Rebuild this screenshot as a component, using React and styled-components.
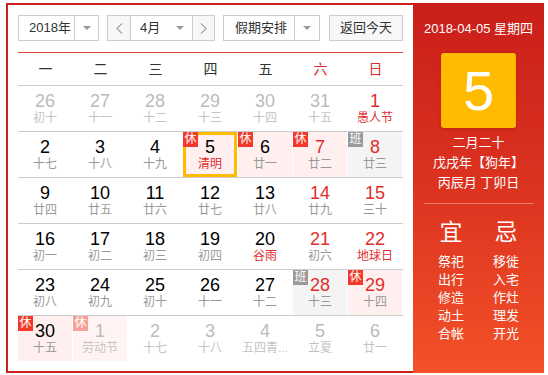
import React from 'react'
import styled, { createGlobalStyle, css } from 'styled-components'

const GlobalStyle = createGlobalStyle`
  body{
    margin:0;
    background:#fff;
    font-family:"Liberation Sans","Noto Sans CJK SC",sans-serif;
  }
`

const weekdays = ['一','二','三','四','五','六','日']

// n: day, l: lunar text, o: other month, f: festival (red lunar), b: badge (rest/work), t: today
const weeks = [
  [{n:26,l:'初十',o:1},{n:27,l:'十一',o:1},{n:28,l:'十二',o:1},{n:29,l:'十三',o:1},{n:30,l:'十四',o:1},{n:31,l:'十五',o:1},{n:1,l:'愚人节',f:1}],
  [{n:2,l:'十七'},{n:3,l:'十八'},{n:4,l:'十九'},{n:5,l:'清明',f:1,b:'rest',t:1},{n:6,l:'廿一',b:'rest'},{n:7,l:'廿二',b:'rest'},{n:8,l:'廿三',b:'work'}],
  [{n:9,l:'廿四'},{n:10,l:'廿五'},{n:11,l:'廿六'},{n:12,l:'廿七'},{n:13,l:'廿八'},{n:14,l:'廿九'},{n:15,l:'三十'}],
  [{n:16,l:'初一'},{n:17,l:'初二'},{n:18,l:'初三'},{n:19,l:'初四'},{n:20,l:'谷雨',f:1},{n:21,l:'初六'},{n:22,l:'地球日',f:1}],
  [{n:23,l:'初八'},{n:24,l:'初九'},{n:25,l:'初十'},{n:26,l:'十一'},{n:27,l:'十二'},{n:28,l:'十三',b:'work'},{n:29,l:'十四',b:'rest'}],
  [{n:30,l:'十五',b:'rest'},{n:1,l:'劳动节',o:1,b:'rest'},{n:2,l:'十七',o:1},{n:3,l:'十八',o:1},{n:4,l:'五四青...',o:1},{n:5,l:'立夏',o:1},{n:6,l:'廿一',o:1}],
]

const yi = ['祭祀','出行','修造','动土','合帐']
const ji = ['移徙','入宅','作灶','理发','开光']

const Frame = styled.div`
  margin:3px 0 0 6px;
  width:538px;
  height:370px;
  box-sizing:border-box;
  border:2px solid #cb1f1b;
  border-right:none;
  display:flex;
`

const Main = styled.div`
  width:405px;
  box-sizing:border-box;
  padding:10px 10px 0 10px;
`

const Toolbar = styled.div`
  display:flex;
  height:26px;
`

const Box = styled.div`
  display:flex;
  height:26px;
  box-sizing:border-box;
  border:1px solid #ccc;
  margin-right:${p=>p.$gap||8}px;
  font-size:13px;
  color:#333;
  background:#fff;
`

const Field = styled.div`
  width:${p=>p.$w}px;
  box-sizing:border-box;
  padding-left:${p=>p.$pad||10}px;
  line-height:24px;
  white-space:nowrap;
`

const Caret = styled.div`
  width:${p=>p.$w||24}px;
  display:flex;
  align-items:center;
  justify-content:center;
  border-left:${p=>p.$line?'1px solid #ccc':'none'};
  &::after{
    content:'';
    border-left:4px solid transparent;
    border-right:4px solid transparent;
    border-top:4px solid #999;
  }
`

const NavBtn = styled.div`
  width:${p=>p.$w}px;
  display:flex;
  align-items:center;
  justify-content:center;
  background:#f7f7f7;
  ${p=>p.$side==='left'?css`border-right:1px solid #ccc;`:css`border-left:1px solid #ccc;`}
`

const TodayBtn = styled.div`
  width:82px;
  height:26px;
  box-sizing:border-box;
  border:1px solid #ccc;
  background:#f7f7f7;
  font-size:13px;
  color:#333;
  line-height:24px;
  text-align:center;
`

const HeadRule = styled.div`
  margin-top:11px;
  border-top:1px solid #e4463b;
`

const WeekHead = styled.div`
  display:grid;
  grid-template-columns:repeat(7,55px);
  height:32px;
  border-bottom:1px solid #ccc;
`

const WeekName = styled.div`
  text-align:center;
  line-height:32px;
  font-size:14px;
  color:${p=>p.$red?'#e02e2e':'#333'};
`

const Row = styled.div`
  display:grid;
  grid-template-columns:repeat(7,54px);
  column-gap:1px;
  height:45px;
  border-bottom:${p=>p.$last?'none':'1px solid #ccc'};
`

const Cell = styled.div`
  position:relative;
  text-align:center;
  box-sizing:border-box;
  padding-top:5px;
  background:${p=>p.$b==='rest'?(p.$o?'#fff4f3':'#fff0ef'):p.$b==='work'?'#f4f4f4':'transparent'};
  ${p=>p.$t&&css`box-shadow:inset 0 0 0 3px #ffbb00;`}
`

const Badge = styled.div`
  position:absolute;
  top:0;
  left:0;
  width:15px;
  height:15px;
  line-height:15px;
  font-size:12px;
  color:#fff;
  text-align:center;
  background:${p=>p.$b==='work'?'#9a9a9a':p.$o?'#f6a197':'#f2392b'};
`

const Num = styled.div`
  font-size:18px;
  line-height:20px;
  color:${p=>p.$o?'#bbb':p.$red?'#e02e2e':'#000'};
`

const Lunar = styled.div`
  font-size:12px;
  line-height:14px;
  white-space:nowrap;
  color:${p=>p.$o?'#c4c4c4':p.$f?'#e02e2e':'#999'};
`

const Panel = styled.div`
  flex:1;
  margin:-2px 0;
  background:linear-gradient(180deg,#ca1e1a 0%,#dc3320 50%,#f35128 100%);
  color:#fff;
  display:flex;
  flex-direction:column;
  align-items:center;
  padding-top:16px;
`

const DateLine = styled.div`
  font-size:13px;
  line-height:20px;
`

const BigDay = styled.div`
  margin-top:14px;
  width:75px;
  height:75px;
  border-radius:3px;
  background:#ffbb00;
  box-shadow:0 1px 3px rgba(120,20,0,.35);
  font-size:56px;
  line-height:75px;
  text-align:center;
  font-family:"Liberation Sans",sans-serif;
`

const LunarInfo = styled.div`
  margin-top:5px;
  font-size:13px;
  line-height:20px;
  text-align:center;
`

const PanelRule = styled.div`
  margin-top:10px;
  width:110px;
  border-top:1px solid rgba(255,255,255,.35);
`

const Advice = styled.div`
  margin-top:13px;
  display:grid;
  grid-template-columns:55px 55px;
  text-align:center;
`

const AdviceHead = styled.div`
  font-size:23px;
  line-height:30px;
  margin-bottom:6px;
`

const AdviceItem = styled.div`
  font-size:13px;
  line-height:18px;
`

const Chevron = ({dir}) => (
  <svg width="7" height="11" viewBox="0 0 7 11">
    <polyline points={dir==='left'?'6,0.5 1,5.5 6,10.5':'1,0.5 6,5.5 1,10.5'} fill="none" stroke="#666" strokeWidth="1"/>
  </svg>
)

export default function App(){
  return (
    <>
      <GlobalStyle/>
      <Frame>
        <Main>
          <Toolbar>
            <Box>
              <Field $w={55} $pad={10}>2018年</Field>
              <Caret $w={23} $line/>
            </Box>
            <Box>
              <NavBtn $w={22} $side="left"><Chevron dir="left"/></NavBtn>
              <Field $w={37} $pad={9}>4月</Field>
              <Caret $w={24}/>
              <NavBtn $w={21} $side="right"><Chevron dir="right"/></NavBtn>
            </Box>
            <Box $gap={9}>
              <Field $w={70} $pad={11}>假期安排</Field>
              <Caret $w={24} $line/>
            </Box>
            <TodayBtn>返回今天</TodayBtn>
          </Toolbar>
          <HeadRule/>
          <WeekHead>
            {weekdays.map((w,i)=><WeekName key={w} $red={i>4}>{w}</WeekName>)}
          </WeekHead>
          {weeks.map((week,r)=>(
            <Row key={r} $last={r===weeks.length-1}>
              {week.map((d,i)=>(
                <Cell key={i} $b={d.b} $o={d.o} $t={d.t}>
                  {d.b&&<Badge $b={d.b} $o={d.o}>{d.b==='rest'?'休':'班'}</Badge>}
                  <Num $o={d.o} $red={i>4}>{d.n}</Num>
                  <Lunar $o={d.o} $f={d.f}>{d.l}</Lunar>
                </Cell>
              ))}
            </Row>
          ))}
        </Main>
        <Panel>
          <DateLine>2018-04-05 星期四</DateLine>
          <BigDay>5</BigDay>
          <LunarInfo>
            <div>二月二十</div>
            <div>戊戌年【狗年】</div>
            <div>丙辰月 丁卯日</div>
          </LunarInfo>
          <PanelRule/>
          <Advice>
            <div>
              <AdviceHead>宜</AdviceHead>
              {yi.map(t=><AdviceItem key={t}>{t}</AdviceItem>)}
            </div>
            <div>
              <AdviceHead>忌</AdviceHead>
              {ji.map(t=><AdviceItem key={t}>{t}</AdviceItem>)}
            </div>
          </Advice>
        </Panel>
      </Frame>
    </>
  )
}
